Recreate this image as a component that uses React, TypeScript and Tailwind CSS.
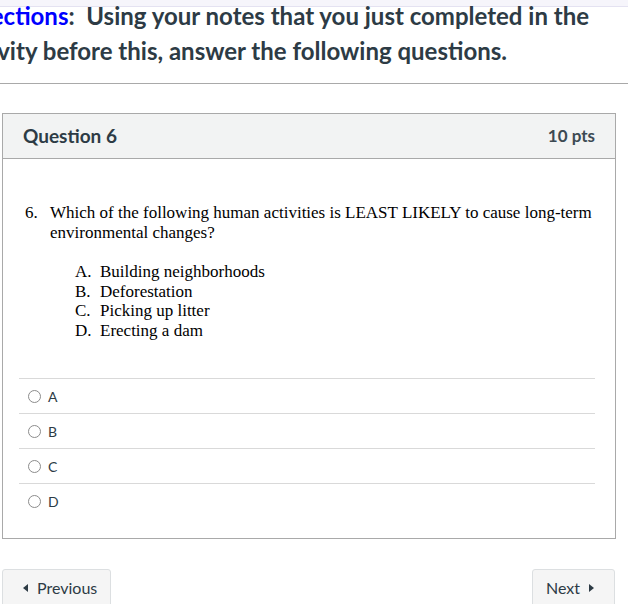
import React from 'react';

const options = [
  { letter: 'A.', text: 'Building neighborhoods' },
  { letter: 'B.', text: 'Deforestation' },
  { letter: 'C.', text: 'Picking up litter' },
  { letter: 'D.', text: 'Erecting a dam' },
];

const answers = ['A', 'B', 'C', 'D'];

const App: React.FC = () => {
  return (
    <div className="w-[628px] h-[604px] overflow-hidden bg-white text-[#2d3b45] font-['Lato','Liberation_Sans',sans-serif]">
      {/* top strip */}
      <div className="h-[7px] bg-[#f6f5fb] border-b border-[#e4e2f1]" />

      {/* directions heading, scrolled so its left edge is cut off */}
      <div className="-mt-[8px] overflow-hidden text-[24px] font-bold leading-[34px] whitespace-nowrap">
        <div className="-ml-[42px]">
          <span className="text-[#0000ff]">Directions</span>:&nbsp; Using your notes that you just completed in the
        </div>
        <div className="-ml-[42px] mt-[1px]">activity before this, answer the following questions.</div>
      </div>

      <div className="mt-[15px] border-t border-[#a9a9a9]" />

      {/* question box */}
      <div className="mt-[29px] ml-[2px] w-[614px] border border-[#a9a9a9]">
        <div className="h-[45px] bg-[#f2f3f3] border-b border-[#a9a9a9] flex items-center justify-between px-[20px]">
          <span className="text-[19px] font-bold">Question 6</span>
          <span className="text-[17px] font-bold text-[#3d4a53]">10 pts</span>
        </div>

        <div className="px-[16px] pt-[44px] font-['Liberation_Serif','Times_New_Roman',serif] text-[17px] text-black">
          <div className="flex leading-[20px] pl-[6px]">
            <span className="w-[25px] shrink-0">6.</span>
            <span className="w-[548px]">
              Which of the following human activities is LEAST LIKELY to cause long-term environmental changes?
            </span>
          </div>
          <div className="mt-[19px] pl-[56px] leading-[19.5px]">
            {options.map((o) => (
              <div key={o.letter} className="flex">
                <span className="w-[25px] shrink-0">{o.letter}</span>
                <span>{o.text}</span>
              </div>
            ))}
          </div>
        </div>

        <div className="mt-[38px] pl-[16px] pr-[20px] pb-[20px]">
          {answers.map((a) => (
            <div key={a} className="h-[35px] border-t border-[#d9d9d9] flex items-center gap-[7px] pl-[9px]">
              <span className="w-[13px] h-[13px] rounded-full border border-[#8c8c8c] bg-white" />
              <span className="text-[14px] text-[#2d3b45]">{a}</span>
            </div>
          ))}
        </div>
      </div>

      {/* navigation */}
      <div className="mt-[30px] pl-[2px] pr-[13px] flex justify-between">
        <button className="h-[38px] w-[109px] rounded-[3px] bg-[#f5f5f5] border border-[#dcdfe1] flex items-center gap-[9px] pl-[20px] text-[16px] text-[#2d3b45]">
          <svg width="5" height="8" viewBox="0 0 5 8"><path d="M5 0 L0 4 L5 8 Z" fill="#2d3b45" /></svg>
          Previous
        </button>
        <button className="h-[38px] w-[83px] rounded-[3px] bg-[#f5f5f5] border border-[#dcdfe1] flex items-center gap-[9px] pl-[13px] text-[16px] text-[#2d3b45]">
          Next
          <svg width="5" height="8" viewBox="0 0 5 8"><path d="M0 0 L5 4 L0 8 Z" fill="#2d3b45" /></svg>
        </button>
      </div>
    </div>
  );
};

export default App;
